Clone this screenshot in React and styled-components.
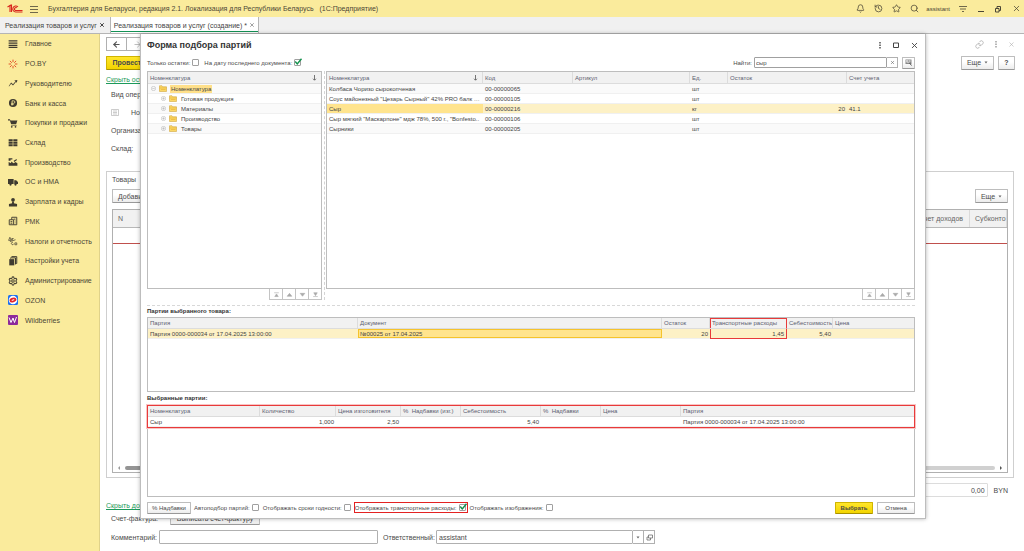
import React from "react";
import styled, { createGlobalStyle, css } from "styled-components";
import { Bell, History, Star, Search, Link, X, Settings, ArrowLeft, ArrowRight } from "lucide-react";

const Global = createGlobalStyle`
  * { box-sizing: border-box; }
  body { margin: 0; background: #fff; }
  body, button, input { font-family: "Liberation Sans", Arial, sans-serif; font-size: 7px; color: #4a4a4a; }
  svg { flex: none; display: block; }
`;

/* ---------- application frame ---------- */

const Shell = styled.div`
  height: 100vh;
  min-height: 500px;
  display: flex;
  flex-direction: column;
  overflow: hidden;
`;

const TopBar = styled.header`
  height: 17px;
  flex: none;
  display: flex;
  align-items: center;
  background: #faeb9c;
  padding: 0 3px 0 7px;
  color: #4b4636;
`;

const AppTitle = styled.div`
  flex: 1;
  margin-left: 10px;
  white-space: pre;
`;

const MenuIcon = styled.svg`
  margin-left: 7px;
`;

const TopTools = styled.div`
  display: flex;
  align-items: center;
  gap: 9px;
`;

const WindowTools = styled(TopTools)`
  margin-left: 11px;
  gap: 10px;
`;

const IconButton = styled.button`
  border: 0;
  padding: 0;
  background: none;
  display: flex;
  color: ${(p) => p.$color || "#4b4636"};
`;

const UserName = styled.span`
  font-size: 6px;
  margin-left: -2px;
`;

const TabStrip = styled.nav`
  height: 17px;
  flex: none;
  display: flex;
  background: #f0f0f0;
  border-bottom: 1px solid #b5b5b5;
`;

const PageTab = styled.div`
  display: flex;
  align-items: center;
  gap: 2px;
  padding: 0 5px;
  border-right: 1px solid #b5b5b5;
  color: #444;
  white-space: nowrap;
  ${(p) =>
    p.$active &&
    css`
      background: #fff;
      padding: 0 3px;
      box-shadow: inset 0 -1px #fff, inset 0 -2px #149256;
    `}
`;

const Workspace = styled.div`
  flex: 1;
  min-height: 0;
  display: flex;
  position: relative;
`;

const Sidebar = styled.nav`
  width: 100px;
  flex: none;
  background: #faeb9c;
  border-right: 1px solid #e0d28a;
`;

const SideList = styled.ul`
  list-style: none;
  margin: 0;
  padding: 0;
  height: 296px;
  display: grid;
  grid-auto-rows: 1fr;
`;

const SideLink = styled.a`
  height: 100%;
  display: flex;
  align-items: center;
  gap: 7px;
  padding-left: 8px;
  color: #4b4636;
  text-decoration: none;
  white-space: nowrap;
`;

/* ---------- document form ---------- */

const Doc = styled.main`
  flex: 1;
  min-width: 0;
  display: flex;
  flex-direction: column;
  padding: 0 9px 7px 6px;
`;

const Bar = styled.div`
  height: ${(p) => p.$h}px;
  flex: none;
  display: flex;
  align-items: center;
  gap: ${(p) => p.$gap || 0}px;
`;

const Spacer = styled.div`
  flex: 1;
`;

const Button = styled.button`
  height: ${(p) => (p.$small ? 12 : 14)}px;
  min-width: ${(p) => p.$w || 0}px;
  padding: 0 ${(p) => (p.$icon ? 2 : 4)}px;
  font-size: ${(p) => (p.$small ? 6 : 7)}px;
  border: 1px solid #bdbdbd;
  border-bottom-color: #999;
  border-radius: 1px;
  background: linear-gradient(#fff 40%, #ececec);
  white-space: nowrap;
  display: flex;
  align-items: center;
  justify-content: center;
  gap: 3px;
  ${(p) =>
    p.$primary &&
    css`
      background: linear-gradient(#ffe62b, #f2d400);
      border-color: #d0b400;
      border-bottom-color: #a89100;
      font-weight: bold;
    `}
`;

const TextLink = styled.a`
  color: #1d9a5b;
  text-decoration: underline;
`;

const LinkRow = styled.div`
  height: 14px;
  flex: none;
  padding-top: 4px;
  line-height: 9px;
`;

const FormRow = styled.div`
  height: ${(p) => p.$h || 18}px;
  flex: none;
  display: flex;
  align-items: center;
  gap: 12px;
  padding-left: 5px;
`;

const Fields = styled.div`
  padding-bottom: 14px;
`;

const TabPanel = styled.section`
  flex: 1;
  min-height: 0;
  display: flex;
  flex-direction: column;
  border: 1px solid #cfcfcf;
  padding: 0 5px 4px;
  margin-right: 1px;
`;

const DocGrid = styled.div`
  flex: 1;
  min-height: 0;
  margin-top: 4px;
  border: 1px solid #b0b0b0;
  display: flex;
  flex-direction: column;
`;

const DocTable = styled.table`
  width: 100%;
  border-collapse: collapse;
  table-layout: fixed;
  th {
    height: 17px;
    padding: 0 0 0 5px;
    background: #f1f1f1;
    border-bottom: 1px solid #b8b8b8;
    border-right: 1px solid #dadada;
    font-weight: normal;
    text-align: left;
    white-space: nowrap;
    color: #666;
  }
  th:nth-child(3) {
    text-align: right;
    padding-right: 6px;
  }
  td {
    height: 16px;
    border-bottom: 1px solid #c0504d;
  }
`;

const ScrollBar = styled.div`
  height: 9px;
  margin-top: auto;
  display: flex;
  align-items: center;
  gap: 4px;
  padding: 0 4px;
`;

const ScrollThumb = styled.div`
  height: 4px;
  flex: 1;
  border-radius: 2px;
  background: linear-gradient(90deg, #949494 10%, #d0d0d0 20%);
`;

const Input = styled.input`
  height: ${(p) => p.$h || 14}px;
  width: ${(p) => p.$w}px;
  font-size: ${(p) => (p.$small ? 6 : 7)}px;
  padding: 0 ${(p) => (p.$small ? 1 : 2)}px;
  border: 1px solid ${(p) => p.$line || "#b0b0b0"};
  border-radius: 1px;
  background: #fff;
  text-align: ${(p) => p.$align || "left"};
  outline: none;
`;

const Joined = styled.div`
  display: flex;
  > button {
    height: ${(p) => p.$h || 14}px;
    width: ${(p) => p.$w || 11}px;
    padding: 0;
    border: 1px solid #b0b0b0;
    background: #fff;
    display: flex;
    align-items: center;
    justify-content: center;
    color: #555;
  }
  > * + button {
    border-left: 0;
  }
`;

const Totals = styled(Bar)`
  justify-content: flex-end;
  margin-top: 5px;
  padding-right: 7px;
  gap: 6px;
`;

const CommentBar = styled(Bar)`
  margin-top: 5px;
  padding-left: 5px;
`;

const FieldLabel = styled.label`
  width: ${(p) => p.$w}px;
`;

/* ---------- picker dialog ---------- */

const Dialog = styled.section`
  position: absolute;
  top: 0;
  left: 140px;
  right: 98px;
  bottom: 32px;
  display: flex;
  flex-direction: column;
  padding: 0 10px 0 6px;
  background: #fff;
  border: 1px solid #bdbdbd;
  border-top: 0;
  box-shadow: 0 0 4px rgba(0, 0, 0, 0.3);
  font-size: 6px;
`;

const TitleBar = styled.div`
  height: 22px;
  flex: none;
  display: flex;
  align-items: center;
  gap: 11px;
  margin-right: -4px;
`;

const DialogTitle = styled.h1`
  margin: 0;
  flex: 1;
  font-size: 9px;
  font-weight: bold;
  color: #333;
`;

const Check = styled.label`
  display: flex;
  align-items: center;
  gap: 2px;
  height: 9px;
  white-space: nowrap;
  ${(p) =>
    p.$marked &&
    css`
      outline: 1px solid #e32222;
    `}
`;

const Box = styled.span`
  position: relative;
  width: 8px;
  height: 7px;
  input {
    appearance: none;
    display: block;
    margin: 0;
    width: 7px;
    height: 7px;
    border: 1px solid #a0a0a0;
    border-radius: 1px;
    background: #fff;
  }
  svg {
    position: absolute;
    left: 0;
    top: -1px;
    pointer-events: none;
  }
`;

const Upper = styled.div`
  flex: 1;
  min-height: 0;
  display: flex;
  margin-top: 2px;
`;

const Pane = styled.div`
  display: flex;
  flex-direction: column;
  align-items: flex-end;
  width: ${(p) => p.$w || "auto"};
  flex: ${(p) => (p.$w ? "none" : "1")};
  min-width: 0;
`;

const Splitter = styled.div`
  width: 4px;
  display: flex;
  justify-content: center;
  &::before {
    content: "";
    border-left: 1px dashed #d4d4d4;
  }
`;

const Frame = styled.div`
  width: 100%;
  border: 1px solid #bdbdbd;
  ${(p) => (p.$h ? `height: ${p.$h}px; flex: none;` : "flex: 1; min-height: 0; overflow: hidden;")}
`;

const Grid = styled.table`
  width: 100%;
  table-layout: fixed;
  border-collapse: separate;
  border-spacing: 0;
  font-size: 6px;
  line-height: 8px;
  ${(p) =>
    p.$marked &&
    css`
      outline: 1px solid #e83a3a;
      box-shadow: 0 0 0 2px #f9c4c4;
    `}
`;

const Th = styled.th`
  height: ${(p) => (p.$low ? 11 : 12)}px;
  padding: 0 2px;
  background: #f1f1f1;
  border-right: 1px solid #dcdcdc;
  border-bottom: 1px solid #dcdcdc;
  font-weight: normal;
  text-align: left;
  color: #5c6070;
  white-space: nowrap;
  overflow: hidden;
  &:last-child {
    border-right: 0;
  }
  ${(p) =>
    p.$marked &&
    css`
      border-right-color: #e83a3a;
      box-shadow: inset 1px 1px #e83a3a;
    `}
`;

const Sortable = styled.span`
  display: flex;
  align-items: center;
  justify-content: space-between;
  padding-right: 2px;
`;

const Td = styled.td`
  height: 10px;
  padding: 0 2px;
  color: #444;
  border-bottom: 1px solid #f0f0f0;
  white-space: nowrap;
  overflow: hidden;
  text-overflow: ellipsis;
  text-align: ${(p) => (p.$num ? "right" : "left")};
  ${(p) => p.$focus && "box-shadow: inset 0 0 0 1px #f5c32c;"}
  ${(p) =>
    p.$marked &&
    css`
      border-right: 1px solid #e83a3a;
      border-bottom-color: #e83a3a;
      box-shadow: inset 1px 0 #e83a3a;
    `}
`;

const Row = styled.tr`
  background: ${(p) => (p.$on ? "#fdf1c6" : p.$alt ? "#fafafa" : "#fff")};
  > td:nth-child(${(p) => p.$hot || 99}) {
    background: #ffe48e;
  }
`;

const TreeItem = styled.div`
  display: flex;
  align-items: center;
  gap: 3px;
  padding-left: ${(p) => p.$level * 10 + 1}px;
  > span {
    padding: 0 1px;
    background: ${(p) => (p.$level ? "none" : "#ffe08a")};
  }
`;

const Pager = styled.div`
  display: flex;
  height: 11px;
  border: 1px solid #c4c4c4;
  border-top: 0;
  button {
    width: 13px;
    border: 0;
    padding: 0;
    background: #fff;
    display: flex;
    align-items: center;
    justify-content: center;
    & + button {
      border-left: 1px solid #c4c4c4;
    }
    &:first-child {
      width: 12px;
    }
  }
`;

const Divider = styled.div`
  margin-top: 5px;
  border-top: 1px dashed #d8d8d8;
`;

const SectionTitle = styled.h2`
  margin: 0;
  height: 11px;
  flex: none;
  line-height: 11px;
  font-size: 6px;
  font-weight: bold;
  color: #333;
`;

/* ---------- drawings ---------- */

const Logo = () => (
  <svg width="16" height="10" viewBox="0 0 32 20" fill="none" stroke="#d8261c" strokeWidth="2.2">
    <path d="M1 6l5-3v13M9 16V2L4 4" />
    <path d="M22 6a6 6 0 1 0-4 10h13M19.500 7.500a3 3 0 1 0-1 5.500H31" />
  </svg>
);

const Burger = () => (
  <MenuIcon width="8" height="8" viewBox="0 0 8 8" stroke="#4b4636">
    <path d="M0 1.500h8M0 4.500h8M0 7.500h8" strokeWidth=".8" />
  </MenuIcon>
);

const SIDE_ICONS = {
  main: <path d="M1 2h14v2H1zM1 5.500h14v2H1zM1 9h14v2H1zM1 12.500h14v2H1z" />,
  poby: (
    <g stroke="#e2552b" strokeWidth="1.600" fill="none">
      <path d="M8 1v4M8 11v4M1 8h4M11 8h4M3 3l3 3M13 3l-3 3M3 13l3-3M13 13l-3-3" />
    </g>
  ),
  lead: <path d="M1 13l4-6 3 3 4-5-2-1 5-1-1 5-1-2-5 6-3-3-3 4z" />,
  bank: (
    <g>
      <circle cx="8" cy="8" r="6.500" />
      <path d="M6.500 12V4.500h2.500a2 2 0 0 1 0 4H5M5 10.500h4" stroke="#faeb9c" strokeWidth="1.300" fill="none" />
    </g>
  ),
  cart: (
    <g>
      <path d="M0 2h3l1 2h11l-2 6H5L3 4H0zM5 11h9v1H5z" />
      <circle cx="6" cy="14" r="1.400" />
      <circle cx="12" cy="14" r="1.400" />
    </g>
  ),
  store: <path d="M1 2h6.500v3H1zM8.500 2H15v3H8.500zM1 6h6.500v3H1zM8.500 6H15v3H8.500zM1 10h6.500v3H1zM8.500 10H15v3H8.500z" />,
  plant: <path d="M1 14V8l4 2V7l4 3 3-2 3 2v4zM1 2h6v2H4v2H1zM9 6l5-3v2l-4 3z" />,
  truck: (
    <g>
      <path d="M0 3h9v8H0zM10 5h3l3 3v3h-6z" />
      <circle cx="4" cy="12" r="1.800" />
      <circle cx="12" cy="12" r="1.800" />
    </g>
  ),
  person: (
    <g>
      <circle cx="8" cy="4.500" r="3" />
      <path d="M6.500 7h3v3l5 1v4h-13v-4l5-1z" />
    </g>
  ),
  rmk: (
    <g fill="none" stroke="#4b4636" strokeWidth="1.600">
      <path d="M2 6h7v8H2zM6 6V2h8v12H9M4 9h3M4 11.500h3M9 5h3M11 8h1M11 11h1" />
    </g>
  ),
  tax: (
    <g fill="none" stroke="#4b4636" strokeWidth="1.200">
      <path d="M1 7l2-5 2 5M1 7h4M6 7V4h3M6 6h2M3 9l9-3M8 10a2 2 0 1 0 1 3M11 14v-3h3v3h-3" />
    </g>
  ),
  books: (
    <g>
      <path d="M2 5h8v10H2z" />
      <path d="M4 4V3h8v10h-1M6 2V1h8v11h-1" fill="none" stroke="#3f3b30" strokeWidth="1.600" />
    </g>
  ),
};

const SideIcon = ({ name }) => {
  if (name === "gear") return <Settings size={10} strokeWidth={2.6} />;
  if (name === "ozon")
    return (
      <svg width="10" height="10" viewBox="0 0 20 20">
        <rect width="20" height="20" rx="3" fill="#1d6ff0" />
        <circle cx="10" cy="10" r="8.500" fill="#fff" />
        <ellipse cx="10" cy="10" rx="7" ry="4.500" fill="#e3242b" transform="rotate(-15 10 10)" />
        <ellipse cx="10" cy="10" rx="3" ry="1" fill="#fff" transform="rotate(-15 10 10)" />
      </svg>
    );
  if (name === "wb")
    return (
      <svg width="10" height="10" viewBox="0 0 20 20">
        <rect width="20" height="20" rx="2" fill="#8d2a9b" />
        <path d="M2 5l4 10 4-9 3 9 4-11" fill="none" stroke="#fff" strokeWidth="2" />
      </svg>
    );
  return (
    <svg width="10" height="10" viewBox="0 0 16 16" fill="#3f3b30">
      {SIDE_ICONS[name]}
    </svg>
  );
};

const Folder = () => (
  <svg width="8" height="7" viewBox="0 0 16 14">
    <path d="M1 1.500h5l1.500 2H15V13H1z" fill="#fbd765" stroke="#c99a2c" />
    <path d="M1 6h14M4 9h9" stroke="#e0a92e" />
  </svg>
);

const Expander = ({ open }) => (
  <svg width="5" height="5" viewBox="0 0 10 10" fill="none" stroke="#aaa">
    <circle cx="5" cy="5" r="4.300" />
    <path d={open ? "M2.500 5h5" : "M2.500 5h5M5 2.500v5"} />
  </svg>
);

const SortArrow = () => (
  <svg width="5" height="6" viewBox="0 0 10 12" fill="none" stroke="#555" strokeWidth="1.600">
    <path d="M5 0v10M2 7.500l3 3 3-3" />
  </svg>
);

const Caret = () => (
  <svg width="4" height="3" viewBox="0 0 8 6" fill="#666">
    <path d="M1 1h6L4 5z" />
  </svg>
);

const Dots = ({ color }) => (
  <svg width="4" height="8" viewBox="0 0 4 8" fill={color}>
    <path d="M1.300 1h1.400v1.400H1.300zM1.300 3.500h1.400v1.400H1.300zM1.300 6h1.400v1.400H1.300z" />
  </svg>
);

const Tick = () => (
  <svg width="9" height="8" viewBox="0 0 18 16" fill="none" stroke="#12904c" strokeWidth="2.800">
    <path d="M2.500 7l4 5L15 1.500" />
  </svg>
);

const PAGER = [
  ["В начало", "M2 3h8M3 9.500h6L6 5z"],
  ["Вверх", "M2 9h8L6 4z"],
  ["Вниз", "M2 4h8L6 9z"],
  ["В конец", "M2 9.500h8M3 3h6L6 8z"],
];

/* ---------- pieces ---------- */

const Checkbox = ({ label, on, marked }) => (
  <Check $marked={marked}>
    {label}
    <Box>
      <input type="checkbox" defaultChecked={on} />
      {on && <Tick />}
    </Box>
  </Check>
);

const PagerButtons = () => (
  <Pager>
    {PAGER.map(([name, d]) => (
      <button key={name} aria-label={name}>
        <svg width="7" height="7" viewBox="0 0 12 12" fill="#aaa" stroke="#aaa">
          <path d={d} />
        </svg>
      </button>
    ))}
  </Pager>
);

const Cols = ({ widths }) => (
  <colgroup>
    {widths.map((w, i) => (
      <col key={i} width={w || undefined} />
    ))}
  </colgroup>
);

const SIDE = [
  ["main", "Главное"],
  ["poby", "PO.BY"],
  ["lead", "Руководителю"],
  ["bank", "Банк и касса"],
  ["cart", "Покупки и продажи"],
  ["store", "Склад"],
  ["plant", "Производство"],
  ["truck", "ОС и НМА"],
  ["person", "Зарплата и кадры"],
  ["rmk", "РМК"],
  ["tax", "Налоги и отчетность"],
  ["books", "Настройки учета"],
  ["gear", "Администрирование"],
  ["ozon", "OZON"],
  ["wb", "Wildberries"],
];

const TREE = ["Номенклатура", "Готовая продукция", "Материалы", "Производство", "Товары"];

const GOODS = [
  ["Колбаса Чоризо сырокопченая", "00-00000065", "шт"],
  ['Соус майонезный "Цезарь Сырный" 42% PRO балк 1 кг', "00-00000105", "шт"],
  ["Сыр", "00-00000216", "кг", "20", "41.1"],
  ['Сыр мягкий "Маскарпоне" мдж 78%, 500 г., "Bonfesto..', "00-00000106", "шт"],
  ["Сырники", "00-00000205", "шт"],
];

const Picker = () => (
  <Dialog role="dialog" aria-label="Форма подбора партий">
    <TitleBar>
      <DialogTitle>Форма подбора партий</DialogTitle>
      <IconButton aria-label="Меню"><Dots color="#444" /></IconButton>
      <IconButton aria-label="Развернуть">
        <svg width="6" height="6" viewBox="0 0 6 6" fill="none" stroke="#444"><path d="M.5 1h5v4.500h-5z" /></svg>
      </IconButton>
      <IconButton aria-label="Закрыть" $color="#444"><X size={9} strokeWidth={2.4} /></IconButton>
    </TitleBar>
    <Bar $h={13} $gap={4}>
      <Checkbox label="Только остатки:" />
      <Checkbox label="На дату последнего документа:" on />
      <Spacer />
      <Bar $h={13} $gap={2}>
        <label htmlFor="find">Найти:</label>
        <Joined $h={11}>
          <Input id="find" $small $h={11} $w={133} $line="#a0a0a0" defaultValue="сыр" />
          <button aria-label="Очистить"><X size={5} strokeWidth={2.4} /></button>
        </Joined>
      </Bar>
      <Button $small $icon $w={13} aria-label="Расширенный поиск">
        <svg width="7" height="7" viewBox="0 0 14 14">
          <path d="M1 1h12v9H1z" fill="#888" />
          <path d="M3 3h2v2H3zM7 3h4M7 5h4M3 7h6" stroke="#fff" fill="#fff" />
          <path d="M9 8l4 5" stroke="#555" strokeWidth="2" />
        </svg>
      </Button>
    </Bar>

    <Upper>
      <Pane $w="175px">
        <Frame>
          <Grid>
            <thead>
              <tr><Th><Sortable>Номенклатура<SortArrow /></Sortable></Th></tr>
            </thead>
            <tbody>
              {TREE.map((name, i) => (
                <Row key={name} $alt={i % 2 === 0}>
                  <Td>
                    <TreeItem $level={i ? 1 : 0}>
                      <Expander open={!i} /><Folder /><span>{name}</span>
                    </TreeItem>
                  </Td>
                </Row>
              ))}
            </tbody>
          </Grid>
        </Frame>
        <PagerButtons />
      </Pane>
      <Splitter />
      <Pane>
        <Frame>
          <Grid>
            <Cols widths={[156, 90, 0, 38, 119, 67]} />
            <thead>
              <tr>
                <Th><Sortable>Номенклатура<SortArrow /></Sortable></Th>
                <Th>Код</Th><Th>Артикул</Th><Th>Ед.</Th><Th>Остаток</Th><Th>Счет учета</Th>
              </tr>
            </thead>
            <tbody>
              {GOODS.map(([name, code, unit, rest, account], i) => (
                <Row key={code} $alt={i % 2 === 0} $on={i === 2} $hot={i === 2 ? 1 : 0}>
                  <Td>{name}</Td><Td>{code}</Td><Td /><Td>{unit}</Td><Td $num>{rest}</Td><Td>{account}</Td>
                </Row>
              ))}
            </tbody>
          </Grid>
        </Frame>
        <PagerButtons />
      </Pane>
    </Upper>

    <Divider />
    <SectionTitle>Партии выбранного товара:</SectionTitle>
    <Frame $h={75}>
      <Grid>
        <Cols widths={[210, 0, 48, 77, 46, 81]} />
        <thead>
          <tr>
            <Th $low>Партия</Th><Th $low>Документ</Th><Th $low>Остаток</Th>
            <Th $low $marked>Транспортные расходы</Th><Th $low>Себестоимость</Th><Th $low>Цена</Th>
          </tr>
        </thead>
        <tbody>
          <Row $on $hot={2}>
            <Td>Партия 0000-000034 от 17.04.2025 13:00:00</Td>
            <Td $focus>№00025 от 17.04.2025</Td>
            <Td $num>20</Td><Td $num $marked>1,45</Td><Td $num>5,40</Td><Td />
          </Row>
        </tbody>
      </Grid>
    </Frame>
    <Bar $h={13}><SectionTitle>Выбранные партии:</SectionTitle></Bar>
    <Frame $h={92}>
      <Grid $marked>
        <Cols widths={[112, 76, 65, 60, 80, 60, 80, 0]} />
        <thead>
          <tr>
            <Th $low>Номенклатура</Th><Th $low>Количество</Th><Th $low>Цена изготовителя</Th>
            <Th $low>% &nbsp;Надбавки (изг.)</Th><Th $low>Себестоимость</Th>
            <Th $low>% &nbsp;Надбавки</Th><Th $low>Цена</Th><Th $low>Партия</Th>
          </tr>
        </thead>
        <tbody>
          <Row>
            <Td>Сыр</Td><Td $num>1,000</Td><Td $num>2,50</Td><Td /><Td $num>5,40</Td><Td /><Td />
            <Td>Партия 0000-000034 от 17.04.2025 13:00:00</Td>
          </Row>
        </tbody>
      </Grid>
    </Frame>
    <Bar $h={21} $gap={3}>
      <Button $small $w={43}>% Надбавки</Button>
      <Checkbox label="Автоподбор партий:" />
      <Checkbox label="Отображать сроки годности:" />
      <Checkbox label="Отображать транспортные расходы:" on marked />
      <Checkbox label="Отображать изображения:" />
      <Spacer />
      <Bar $h={21} $gap={4}>
        <Button $small $primary $w={38}>Выбрать</Button>
        <Button $small $w={38}>Отмена</Button>
      </Bar>
    </Bar>
  </Dialog>
);

export default function App() {
  return (
    <Shell>
      <Global />
      <TopBar>
        <Logo />
        <Burger />
        <AppTitle>{"Бухгалтерия для Беларуси, редакция 2.1. Локализация для Республики Беларусь   (1С:Предприятие)"}</AppTitle>
        <TopTools>
          <IconButton aria-label="Уведомления"><Bell size={9} /></IconButton>
          <IconButton aria-label="История"><History size={9} /></IconButton>
          <IconButton aria-label="Избранное"><Star size={9} /></IconButton>
          <IconButton aria-label="Поиск"><Search size={9} /></IconButton>
          <UserName>assistant</UserName>
          <IconButton aria-label="Настройки">
            <svg width="8" height="8" viewBox="0 0 8 8" stroke="#4b4636" strokeWidth=".8"><path d="M0 1.500h8M1 4h6M3 6.500h2" /></svg>
          </IconButton>
        </TopTools>
        <WindowTools>
          <IconButton aria-label="Свернуть">
            <svg width="6" height="8" viewBox="0 0 6 8" stroke="#4b4636"><path d="M0 6.500h6" /></svg>
          </IconButton>
          <IconButton aria-label="Восстановить">
            <svg width="8" height="8" viewBox="0 0 8 8" fill="none" stroke="#4b4636"><path d="M1.500 3.500h3.500v3.500h-3.500zM3 3V1.500h3.500V5.500H5" /></svg>
          </IconButton>
          <IconButton aria-label="Закрыть"><X size={9} /></IconButton>
        </WindowTools>
      </TopBar>
      <TabStrip>
        <PageTab>Реализация товаров и услуг <X size={6} strokeWidth={4} /></PageTab>
        <PageTab $active>Реализация товаров и услуг (создание) * <X size={6} /></PageTab>
      </TabStrip>
      <Workspace>
        <Sidebar>
          <SideList>
            {SIDE.map(([icon, label]) => (
              <li key={icon}>
                <SideLink href="#"><SideIcon name={icon} />{label}</SideLink>
              </li>
            ))}
          </SideList>
        </Sidebar>
        <Doc>
          <Bar $h={20}>
            <Joined $w={21}>
              <button aria-label="Назад"><ArrowLeft size={9} strokeWidth={3} /></button>
              <button aria-label="Вперед"><ArrowRight size={9} color="#aaa" /></button>
            </Joined>
            <Spacer />
            <Bar $h={20} $gap={10}>
              <IconButton aria-label="Ссылка" $color="#aaa"><Link size={9} /></IconButton>
              <IconButton aria-label="Меню"><Dots color="#999" /></IconButton>
              <IconButton aria-label="Закрыть" $color="#aaa"><X size={7} /></IconButton>
            </Bar>
          </Bar>
          <Bar $h={17} $gap={4}>
            <Button $primary $w={46}>Провести</Button>
            <Spacer />
            <Button $w={33}>Еще <Caret /></Button>
            <Button $w={17}><b>?</b></Button>
          </Bar>
          <LinkRow><TextLink href="#">Скрыть основное</TextLink></LinkRow>
          <Fields>
            <FormRow>Вид операции:</FormRow>
            <FormRow>
              <svg width="8" height="7" viewBox="0 0 16 14" fill="none" stroke="#999"><path d="M1 1h14v12H1zM4 4h8M4 7h8M4 10h8" /></svg>
              Номер:
            </FormRow>
            <FormRow>Организация:</FormRow>
            <FormRow>Склад:</FormRow>
          </Fields>
          <TabPanel>
            <Bar $h={15}>Товары</Bar>
            <Bar $h={18}>
              <Button $w={43}>Добавить</Button>
              <Spacer />
              <Button $w={33}>Еще <Caret /></Button>
            </Bar>
            <DocGrid>
              <DocTable>
                <Cols widths={[60, 0, 60, 37]} />
                <thead><tr><th>N</th><th /><th>Счет доходов</th><th>Субконто</th></tr></thead>
                <tbody><tr><td /><td /><td /><td /></tr></tbody>
              </DocTable>
              <ScrollBar>
                <svg width="4" height="4" viewBox="0 0 4 4" fill="#999"><path d="M3 0v4L1 2z" /></svg>
                <ScrollThumb />
                <svg width="4" height="4" viewBox="0 0 4 4" fill="#555"><path d="M1 0v4l2-2z" /></svg>
              </ScrollBar>
            </DocGrid>
          </TabPanel>
          <Totals $h={14}>
            <Input aria-label="Всего" readOnly $w={70} $line="#dcdcdc" $align="right" defaultValue="0,00" />
            <span>BYN</span>
          </Totals>
          <LinkRow><TextLink href="#">Скрыть дополнительно</TextLink></LinkRow>
          <FormRow $h={14}>
            Счет-фактура: <Button $w={90}>Выписать счет-фактуру</Button>
          </FormRow>
          <CommentBar $h={14}>
            <FieldLabel $w={48} htmlFor="comment">Комментарий:</FieldLabel>
            <Input id="comment" $w={219} />
            <FieldLabel as="span" $w={5} />
            <FieldLabel $w={53} htmlFor="owner">Ответственный:</FieldLabel>
            <Joined>
              <Input id="owner" $w={197} defaultValue="assistant" />
              <button aria-label="Выбрать"><Caret /></button>
              <button aria-label="Открыть">
                <svg width="7" height="7" viewBox="0 0 14 14" fill="none" stroke="#666" strokeWidth="1.500"><path d="M5 2h8v6H5zM5 6H2v6h7V8" /></svg>
              </button>
            </Joined>
          </CommentBar>
        </Doc>
        <Picker />
      </Workspace>
    </Shell>
  );
}
